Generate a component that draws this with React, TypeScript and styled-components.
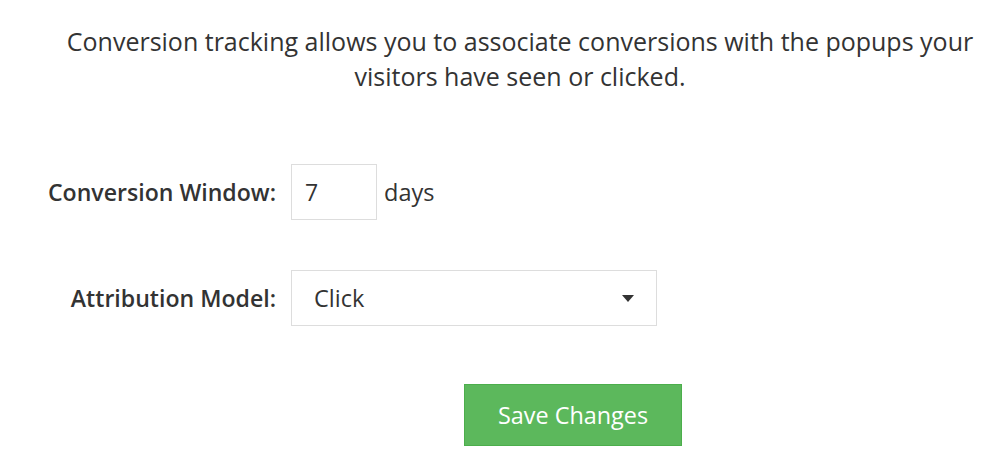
import styled, { createGlobalStyle } from "styled-components"

const GlobalStyle = createGlobalStyle`
  body {
    margin: 0;
    background: #ffffff;
    font-family: "Open Sans", "Noto Sans", sans-serif;
    color: #333333;
  }
`

const App = () => {
  return (
    <Page>
      <GlobalStyle />
      <Intro>
        Conversion tracking allows you to associate conversions with the popups your visitors have seen or clicked.
      </Intro>
      <Form>
        <Label>Conversion Window:</Label>
        <Field>
          <NumberBox type="text" defaultValue="7" />
          <Unit>days</Unit>
        </Field>
        <Label>Attribution Model:</Label>
        <Field>
          <SelectBox>
            <span>Click</span>
            <svg width="12" height="7" viewBox="0 0 12 7">
              <path d="M0 0 L12 0 L6 7 Z" fill="#333" />
            </svg>
          </SelectBox>
        </Field>
        <span />
        <Actions>
          <SaveButton>Save Changes</SaveButton>
        </Actions>
      </Form>
    </Page>
  )
}

export default App

const Page = styled.div`
  width: 1000px;
  height: 470px;
  box-sizing: border-box;
  padding: 24px 0 0 40px;
`
const Intro = styled.p`
  margin: 0;
  padding: 0 20px;
  font-size: 25px;
  line-height: 35px;
  text-align: center;
`
const Form = styled.div`
  display: grid;
  grid-template-columns: 236px 1fr;
  column-gap: 15px;
  row-gap: 50px;
  align-items: center;
  margin-top: 70px;
`
const Label = styled.label`
  font-size: 23.1px;
  font-weight: 600;
  text-align: right;
  color: #333;
`
const Field = styled.div`
  display: flex;
  align-items: center;
  gap: 7px;
`
const NumberBox = styled.input`
  width: 86px;
  height: 56px;
  box-sizing: border-box;
  border: 1px solid #dddddd;
  padding: 0 13px;
  font-family: inherit;
  font-size: 23px;
  color: #333;
  outline: none;
`
const Unit = styled.span`
  font-size: 23.5px;
`
const SelectBox = styled.div`
  width: 366px;
  height: 56px;
  box-sizing: border-box;
  border: 1px solid #dddddd;
  padding: 0 22px;
  display: flex;
  align-items: center;
  justify-content: space-between;
  font-size: 23.5px;
`
const Actions = styled.div`
  margin-top: 8px;
  padding-left: 173px;
`
const SaveButton = styled.button`
  width: 218px;
  height: 62px;
  background: #5cb85c;
  border: 1px solid #4cae4c;
  color: #ffffff;
  font-family: inherit;
  font-size: 23.4px;
  cursor: pointer;
`
